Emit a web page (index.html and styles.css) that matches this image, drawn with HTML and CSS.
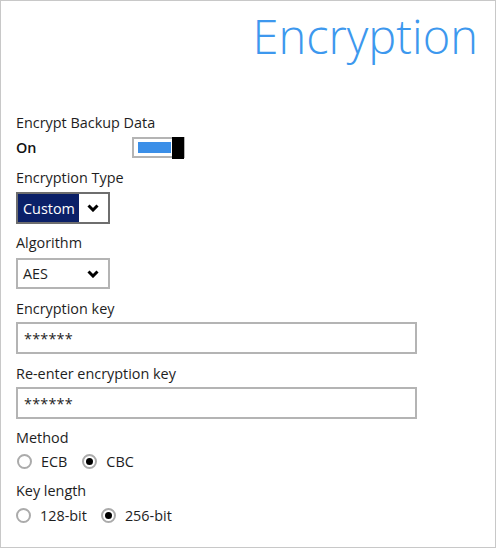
FILE: index.html
```html
<!DOCTYPE html>
<html>
<head>
<meta charset="utf-8">
<link rel="stylesheet" href="styles.css">
</head>
<body>
<div class="frame">
  <h1 class="title">Encryption</h1>

  <div class="label first">Encrypt Backup Data</div>
  <div class="toggle-row">
    <span class="state">On</span>
    <span class="switch"><span class="track"></span><span class="knob"></span></span>
  </div>

  <div class="label l-type">Encryption Type</div>
  <div class="select dark">
    <span class="value">Custom</span>
    <span class="arrow"><svg width="12" height="8" viewBox="0 0 12 8"><polyline points="1.5,1.5 6,6 10.5,1.5" fill="none" stroke="#000" stroke-width="3"/></svg></span>
  </div>

  <div class="label l-algo">Algorithm</div>
  <div class="select light">
    <span class="value">AES</span>
    <span class="arrow"><svg width="12" height="8" viewBox="0 0 12 8"><polyline points="1.5,1.5 6,6 10.5,1.5" fill="none" stroke="#000" stroke-width="3"/></svg></span>
  </div>

  <div class="label l-key">Encryption key</div>
  <div class="input">******</div>

  <div class="label l-key">Re-enter encryption key</div>
  <div class="input">******</div>

  <div class="label l-method">Method</div>
  <div class="radio-row">
    <span class="radio"></span><span class="rtext r1">ECB</span>
    <span class="radio on"></span><span class="rtext">CBC</span>
  </div>

  <div class="label l-len">Key length</div>
  <div class="radio-row row2">
    <span class="radio"></span><span class="rtext r1b">128-bit</span>
    <span class="radio on"></span><span class="rtext">256-bit</span>
  </div>
</div>
</body>
</html>
```

FILE: styles.css
```css
html, body {
  margin: 0;
  padding: 0;
  background: #fff;
}
.frame {
  width: 496px;
  height: 548px;
  box-sizing: border-box;
  border: 1px solid #c8c8c8;
  padding: 0 0 0 15px;
  font-family: "Open Sans", "Noto Sans", sans-serif;
  font-size: 14.4px;
  color: #1e1e1e;
}
.title {
  margin: 5px 17px 0 0;
  text-align: right;
  font-weight: 300;
  font-size: 47px;
  line-height: 60px;
  color: #3d98ee;
}
.label {
  line-height: 20px;
}
.label.first { margin-top: 47px; }
.l-type { margin-top: 10px; }
.l-algo { margin-top: 9px; }
.l-key { margin-top: 10px; }
.l-method { margin-top: 9px; }
.l-len { margin-top: 11px; }

.toggle-row {
  display: flex;
  align-items: center;
  height: 21px;
  margin-top: 4px;
}
.state {
  font-weight: 600;
  width: 116px;
  color: #111;
}
.switch {
  position: relative;
  display: block;
  width: 53px;
  height: 21px;
  box-sizing: border-box;
  border: 2px solid #b4b4b4;
  padding: 3px 12px 3px 4px;
  background: #fff;
}
.track {
  display: block;
  height: 100%;
  background: #3b8fe8;
}
.knob {
  position: absolute;
  right: -1px;
  top: -2px;
  width: 12px;
  height: 22px;
  background: #000;
}

.select {
  display: flex;
  width: 94px;
  box-sizing: border-box;
  margin-top: 4px;
  background: #fff;
}
.select.dark {
  height: 32px;
  border: 2px solid #6e6e6e;
}
.select.light {
  height: 31px;
  margin-top: 5px;
  border: 2px solid #b4b4b4;
}
.select .value {
  flex: 1;
  display: flex;
  align-items: center;
  padding-left: 5px;
}
.select.dark .value {
  background: #0b2068;
  color: #fff;
  flex: 0 0 61px;
  box-sizing: border-box;
}
.select .arrow {
  flex: 1;
  display: flex;
  align-items: center;
  justify-content: flex-end;
  padding-right: 9px;
}
.select .arrow svg { display: block; }

.input {
  width: 401px;
  height: 32px;
  box-sizing: border-box;
  border: 2px solid #b4b4b4;
  margin-top: 3px;
  padding-left: 6px;
  display: flex;
  align-items: center;
  letter-spacing: 0.2px;
}

.radio-row {
  display: flex;
  align-items: center;
  height: 17px;
  margin-top: 5px;
  padding-left: 1px;
}
.row2 { margin-top: 6px; padding-left: 0; }
.radio {
  width: 15px;
  height: 15px;
  box-sizing: border-box;
  border: 2px solid #ababab;
  border-radius: 50%;
  background: #fff;
  display: flex;
  align-items: center;
  justify-content: center;
  flex: none;
}
.radio.on::after {
  content: "";
  width: 7px;
  height: 7px;
  border-radius: 50%;
  background: #000;
}
.rtext {
  margin-left: 9px;
}
.r1 { margin-right: 15px; }
.r1b { margin-right: 14px; }
```
